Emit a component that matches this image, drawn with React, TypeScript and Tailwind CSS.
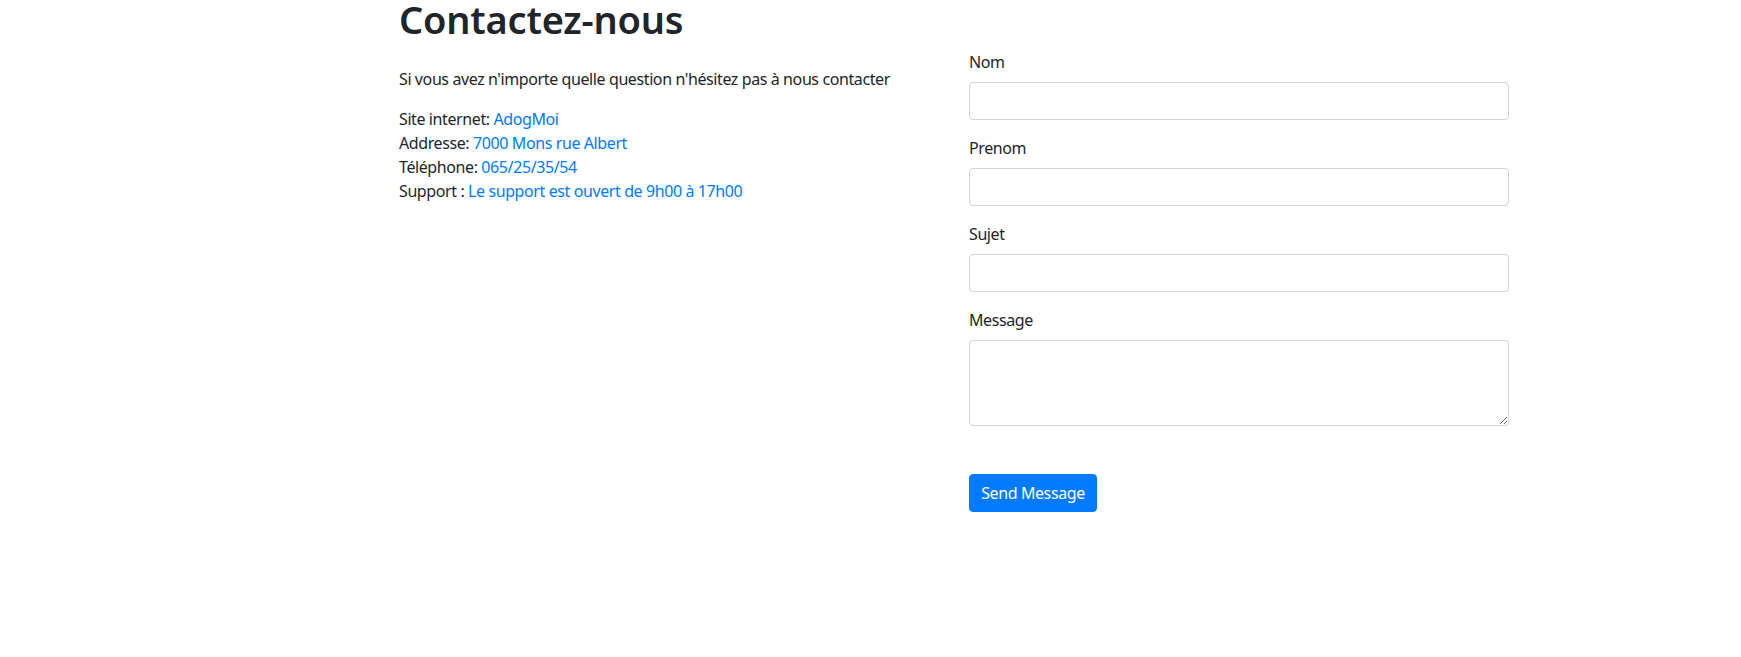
import React from "react";

export default function App() {
  const inputCls =
    "block w-full h-[38px] rounded-[4px] border border-[#ced4da] bg-white px-3 text-[16px] text-[#495057] outline-none";
  return (
    <div className="min-h-[657px] w-full bg-white text-[#212529] font-['Noto_Sans','Segoe_UI',sans-serif] text-[16px] leading-[24px] tracking-[-0.4px]">
      <div className="ml-[399px] w-[1110px]">
        <h1 className="text-[38px] leading-[38px] font-semibold m-0 tracking-[-0.2px]">Contactez-nous</h1>
        <div className="grid grid-cols-2 gap-[30px] mt-[12px]">
          <div className="pt-[17px]">
            <p className="mb-4">Si vous avez n'importe quelle question n'hésitez pas à nous contacter</p>
            <div>
              <div>
                Site internet: <a className="text-[#007bff]" href="#">AdogMoi</a>
              </div>
              <div>
                Addresse: <a className="text-[#007bff]" href="#">7000 Mons rue Albert</a>
              </div>
              <div>
                Téléphone: <a className="text-[#007bff]" href="#">065/25/35/54</a>
              </div>
              <div>
                Support : <a className="text-[#007bff]" href="#">Le support est ouvert de 9h00 à 17h00</a>
              </div>
            </div>
          </div>
          <form className="flex flex-col" onSubmit={(e) => e.preventDefault()}>
            <div className="mb-4">
              <label className="block mb-2">Nom</label>
              <input type="text" className={inputCls} />
            </div>
            <div className="mb-4">
              <label className="block mb-2">Prenom</label>
              <input type="text" className={inputCls} />
            </div>
            <div className="mb-4">
              <label className="block mb-2">Sujet</label>
              <input type="text" className={inputCls} />
            </div>
            <div className="mb-4">
              <label className="block mb-2">Message</label>
              <textarea
                rows={3}
                className="block w-full h-[86px] rounded-[4px] border border-[#ced4da] bg-white px-3 py-1.5 text-[16px] text-[#495057] outline-none resize-y"
              />
            </div>
            <div className="mt-[32px]">
              <button
                type="submit"
                className="h-[38px] w-[128px] rounded-[4px] border border-[#007bff] bg-[#007bff] text-white text-[16px] leading-[24px] tracking-[-0.4px]"
              >
                Send Message
              </button>
            </div>
          </form>
        </div>
      </div>
    </div>
  );
}
